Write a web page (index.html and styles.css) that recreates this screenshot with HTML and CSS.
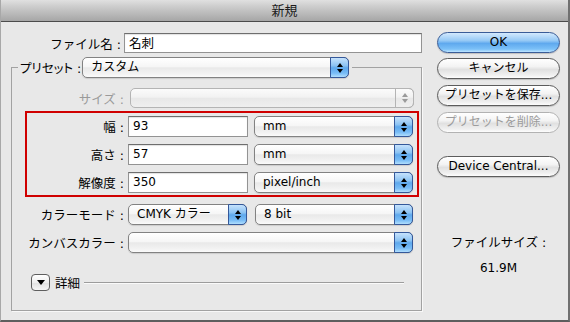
FILE: index.html
```html
<!DOCTYPE html>
<html>
<head>
    <title>新規</title>
    <link rel="stylesheet" href="styles.css">
</head>
<body>
    <div class="window">
        <div class="titlebar">新規</div>
        <div class="content">
            <div class="main">
                <div class="row file-row">
                    <span class="label">ファイル名 :</span>
                    <div class="textfield name-field">名刺</div>
                </div>
                <fieldset class="group">
                    <legend class="preset">
                        <span class="label">プリセット :</span>
                        <div class="popup preset-popup"><span class="value">カスタム</span><span class="arrows"></span></div>
                    </legend>
                    <div class="row size-row">
                        <span class="label disabled">サイズ :</span>
                        <div class="popup off size-popup"><span class="value"></span><span class="arrows"></span></div>
                    </div>
                    <div class="highlight">
                        <div class="row">
                            <span class="label">幅 :</span>
                            <div class="textfield num-field">93</div>
                            <div class="popup unit-popup"><span class="value">mm</span><span class="arrows"></span></div>
                        </div>
                        <div class="row">
                            <span class="label">高さ :</span>
                            <div class="textfield num-field">57</div>
                            <div class="popup unit-popup"><span class="value">mm</span><span class="arrows"></span></div>
                        </div>
                        <div class="row">
                            <span class="label">解像度 :</span>
                            <div class="textfield num-field">350</div>
                            <div class="popup unit-popup"><span class="value">pixel/inch</span><span class="arrows"></span></div>
                        </div>
                    </div>
                    <div class="row mode-row">
                        <span class="label">カラーモード :</span>
                        <div class="popup mode-popup"><span class="value">CMYK カラー</span><span class="arrows"></span></div>
                        <div class="popup bit-popup"><span class="value">8 bit</span><span class="arrows"></span></div>
                    </div>
                    <div class="row canvas-row">
                        <span class="label">カンバスカラー :</span>
                        <div class="popup canvas-popup"><span class="value"></span><span class="arrows"></span></div>
                    </div>
                    <div class="details">
                        <div class="disclosure"></div>
                        <span class="details-text">詳細</span>
                        <div class="separator"></div>
                    </div>
                </fieldset>
            </div>
            <div class="side">
                <div class="btn btn-default btn-ok">OK</div>
                <div class="btn">キャンセル</div>
                <div class="btn">プリセットを保存...</div>
                <div class="btn btn-disabled">プリセットを削除...</div>
                <div class="btn btn-device">Device Central...</div>
                <div class="filesize-label">ファイルサイズ :</div>
                <div class="filesize">61.9M</div>
            </div>
        </div>
    </div>
</body>
</html>
```

FILE: styles.css
```css
/* Photoshop "New" dialog, Aqua look */
body {
    margin: 0;
    background-color: #e8e8e8;
    font-family: "DejaVu Sans", "Noto Sans CJK JP", sans-serif;
    font-size: 12px;
    color: #000;
}

.window {
    width: 570px;
    height: 322px;
    box-sizing: border-box;
    background-color: #e8e8e8;
    border-left: 1px solid #a8a8a8;
    border-right: 2px solid #707070;
    border-bottom: 2px solid #5e5e5e;
}

.titlebar {
    height: 21px;
    line-height: 21px;
    text-align: center;
    font-size: 13px;
    color: #1c1c1c;
    background: linear-gradient(#e0e0e0, #cdcdcd 30%, #a6a6a6);
    border-bottom: 1px solid #4c4c4c;
}

.content {
    display: flex;
    padding: 10px 0 0 10px;
}

.main {
    width: 411px;
}

.side {
    width: 123px;
    margin-left: 15px;
    display: flex;
    flex-direction: column;
}

.row {
    display: flex;
    align-items: center;
    height: 21px;
}

.label {
    font-size: 12.5px;
    text-align: right;
    white-space: nowrap;
    flex-shrink: 0;
}

.label.disabled {
    color: #9a9a9a;
}

/* text fields */
.textfield {
    box-sizing: border-box;
    height: 21px;
    line-height: 19px;
    padding-left: 4px;
    background-color: #fff;
    border: 1px solid #939393;
    border-top-color: #6e6e6e;
    box-shadow: inset 0 1px 1px rgba(0, 0, 0, 0.12);
    white-space: nowrap;
}

.file-row {
    margin-top: 1px;
    height: 20px;
}

.file-row .label {
    width: 110px;
    margin-right: 3px;
}

.name-field {
    width: 298px;
    height: 20px;
    font-size: 12.5px;
}

.num-field {
    width: 120px;
    margin-right: 6px;
}

/* popup menus */
.popup {
    display: flex;
    box-sizing: border-box;
    height: 21px;
    border: 1px solid #828282;
    border-radius: 5px;
    background: linear-gradient(#ffffff, #f6f6f6 45%, #e9e9e9 52%, #f3f3f3 85%, #fbfbfb);
    box-shadow: 0 1px 1px rgba(0, 0, 0, 0.12);
}

.popup .value {
    flex: 1;
    padding-left: 8px;
    line-height: 19px;
    white-space: nowrap;
}

.arrows {
    width: 17px;
    margin: -1px -1px -1px 0;
    border: 1px solid #34589a;
    border-radius: 0 5px 5px 0;
    background: linear-gradient(#c6e2fc, #8cc3f3 40%, #5ea8ec 52%, #78bcf6 80%, #b0defd);
    display: flex;
    flex-direction: column;
    align-items: center;
    justify-content: center;
    gap: 2px;
}

.arrows::before,
.arrows::after {
    content: "";
    width: 0;
    height: 0;
    border-left: 3px solid transparent;
    border-right: 3px solid transparent;
}

.arrows::before {
    border-bottom: 4px solid #000;
}

.arrows::after {
    border-top: 4px solid #000;
}

.popup.off {
    border-color: #b4b4b4;
    background: linear-gradient(#fbfbfb, #f2f2f2 45%, #e8e8e8 52%, #efefef);
    box-shadow: none;
}

.popup.off .arrows {
    border-color: #b4b4b4;
    background: transparent;
}

.popup.off .arrows::before {
    border-bottom-color: #9a9a9a;
}

.popup.off .arrows::after {
    border-top-color: #9a9a9a;
}

/* group box */
.group {
    margin: 4px 0 0 0;
    padding: 0 0 19px 6px;
    min-width: 0;
    border: 1px solid #a2a2a2;
    box-shadow: 1px 1px 0 #f8f8f8;
}

.preset {
    display: flex;
    align-items: center;
    padding: 0 3px 0 2px;
    height: 21px;
}

.preset .label {
    font-feature-settings: "palt";
    margin-right: 1px;
}

.preset-popup {
    width: 267px;
}

.size-row {
    margin-top: 10px;
    height: 20px;
}

.size-row .label {
    width: 106px;
    margin-right: 6px;
}

.size-popup {
    width: 284px;
    height: 20px;
}

.highlight {
    width: 394px;
    box-sizing: border-box;
    margin: 3px 0 0 7px;
    padding: 3px 0 2px 0;
    border: 2px solid #d00000;
    display: flex;
    flex-direction: column;
    gap: 7px;
}

.highlight .label {
    width: 97px;
    margin-right: 4px;
}

.unit-popup {
    width: 159px;
}

.mode-row {
    margin-top: 7px;
}

.mode-row .label,
.canvas-row .label {
    width: 106px;
    margin-right: 4px;
}

.mode-popup {
    width: 119px;
    margin-right: 8px;
}

.bit-popup {
    width: 158px;
}

.canvas-row {
    margin-top: 7px;
}

.canvas-popup {
    width: 285px;
}

.details {
    display: flex;
    align-items: center;
    height: 17px;
    margin-top: 21px;
    padding-left: 13px;
}

.disclosure {
    width: 19px;
    height: 17px;
    box-sizing: border-box;
    border: 1px solid #5e5e5e;
    border-radius: 4px;
    background: linear-gradient(#ffffff, #eeeeee 50%, #e2e2e2 55%, #f6f6f6);
    display: flex;
    align-items: center;
    justify-content: center;
}

.disclosure::after {
    content: "";
    border-left: 4px solid transparent;
    border-right: 4px solid transparent;
    border-top: 5px solid #000;
}

.details-text {
    font-size: 12.5px;
    margin-left: 5px;
}

.separator {
    flex: 1;
    height: 0;
    margin: 0 17px 0 4px;
    border-top: 1px solid #9c9c9c;
    border-bottom: 1px solid #fafafa;
}

/* push buttons */
.btn {
    box-sizing: border-box;
    height: 21px;
    line-height: 19px;
    margin-bottom: 6px;
    text-align: center;
    white-space: nowrap;
    border: 1px solid #5c5c5c;
    border-radius: 11px;
    background: linear-gradient(#ffffff, #f3f3f3 40%, #e1e1e1 55%, #f0f0f0 85%, #fdfdfd);
    box-shadow: 0 1px 1px rgba(0, 0, 0, 0.18);
}

.btn-ok {
    margin-bottom: 5px;
}

.btn-default {
    border-color: #3a5c97;
    background: linear-gradient(#d3e9fd, #96c9f5 40%, #5fa9ee 55%, #7cc1f8 85%, #bfe5ff);
}

.btn-disabled {
    color: #9c9c9c;
    border-color: #b2b2b2;
    box-shadow: none;
}

.btn-device {
    margin-top: 17px;
}

.filesize-label {
    margin-top: 52px;
    line-height: 16px;
    text-align: center;
    font-size: 12.5px;
}

.filesize {
    margin-top: 9px;
    line-height: 16px;
    text-align: center;
}
```
